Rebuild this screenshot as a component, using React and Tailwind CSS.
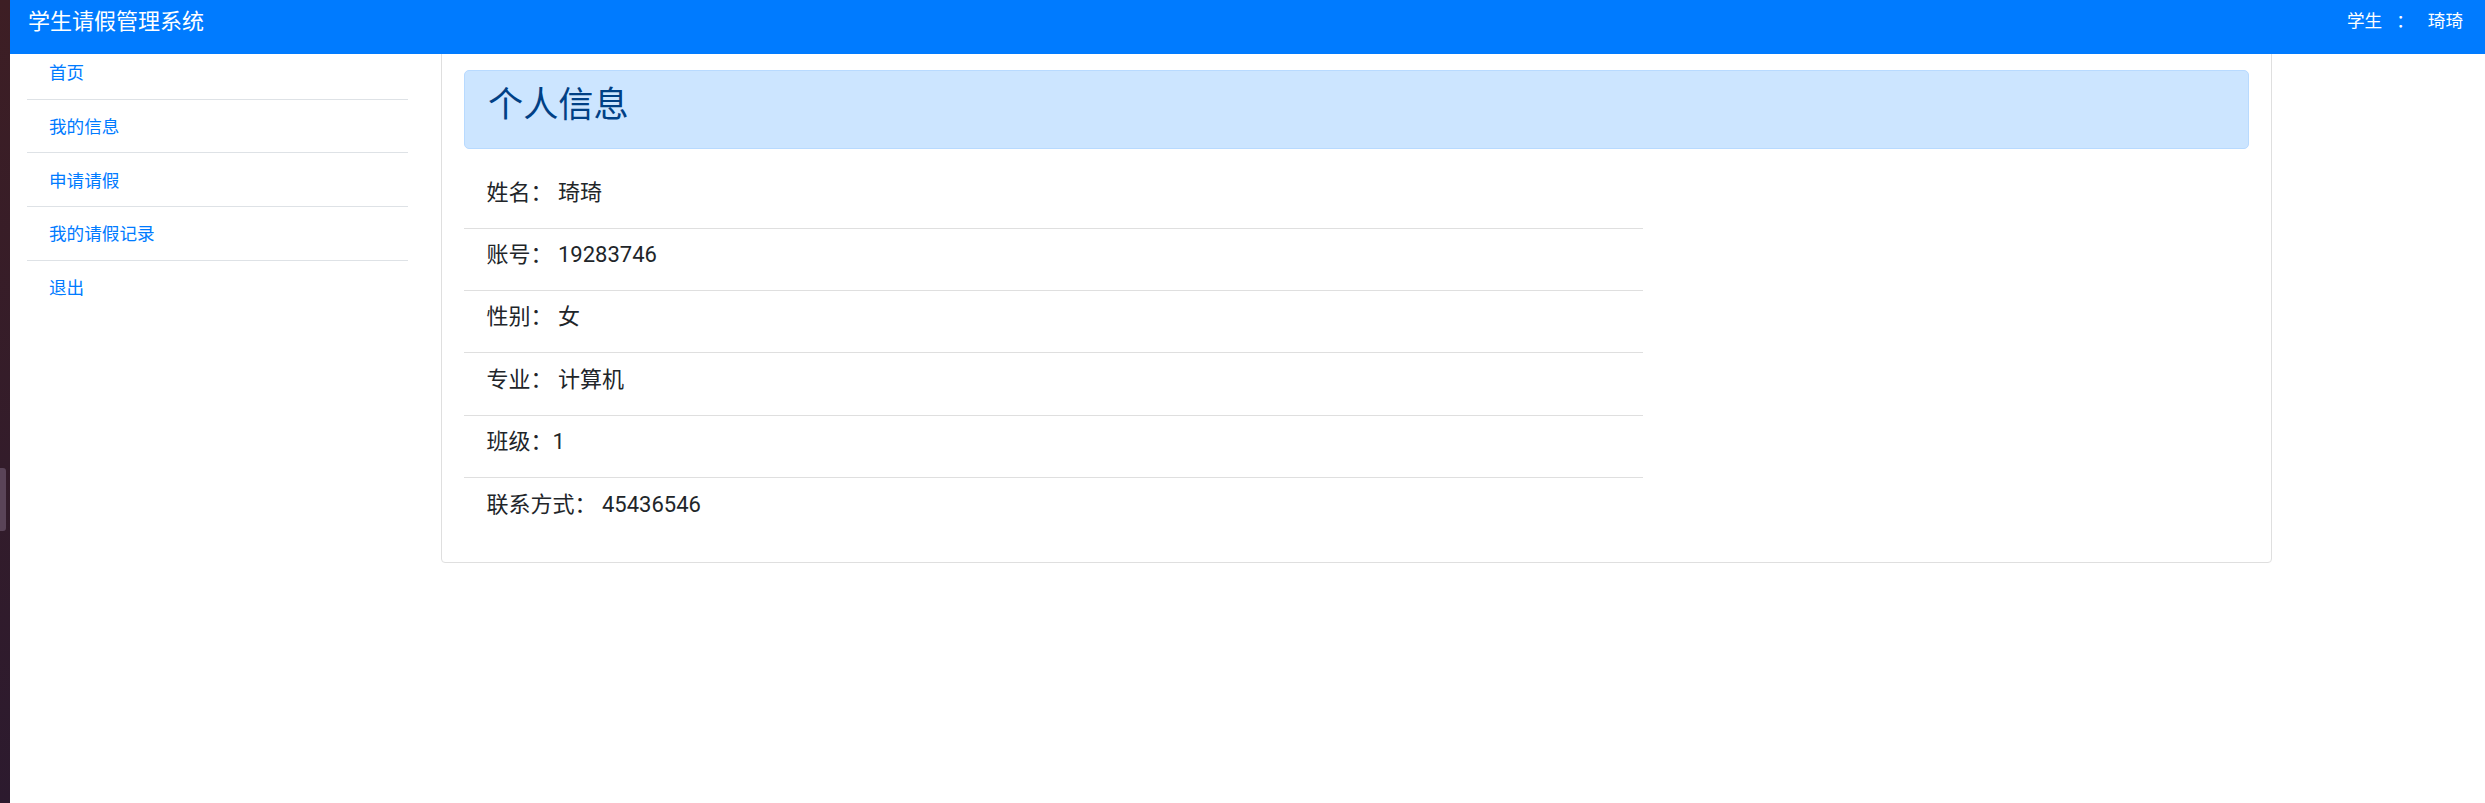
const navItems = ["首页", "我的信息", "申请请假", "我的请假记录", "退出"];

const rows = [
  ["姓名：", " 琦琦"],
  ["账号：", " 19283746"],
  ["性别：", " 女"],
  ["专业：", " 计算机"],
  ["班级：", "1"],
  ["联系方式：", " 45436546"],
];

export default function App() {
  return (
    <div className="flex h-screen w-full overflow-hidden bg-white font-[Roboto,'Noto_Sans_CJK_SC',sans-serif]">
      <div className="flex w-[10px] shrink-0 flex-col bg-gradient-to-b from-[#3d1e24] to-[#2c1a2e]">
        <div className="mt-[468px] h-[63px] w-[6px] rounded-r-[3px] bg-[#5a4458]" />
      </div>
      <div className="flex min-w-0 flex-1 flex-col">
        <nav className="relative z-10 flex h-[54px] shrink-0 items-center justify-between bg-[#007bff] pb-[10px] pl-[18px] pr-[22px]">
          <span className="whitespace-pre text-[22px] leading-none text-white">学生请假管理系统</span>
          <div className="flex items-center text-[17.6px] leading-none text-white">
            <span>学生</span>
            <span className="mx-[14px]">：</span>
            <span>琦琦</span>
          </div>
        </nav>
        <div className="-mt-[8px] flex items-start">
          <aside className="w-[431px] shrink-0 pl-[17px] pr-[33px]">
            <ul>
              {navItems.map((t, i) => (
                <li
                  key={t}
                  className={
                    "flex h-[53.7px] items-center pl-[22px] pt-[2px] text-[17.6px] text-[#007bff] " +
                    (i < navItems.length - 1 ? "border-b border-[#dee2e6]" : "")
                  }
                >
                  {t}
                </li>
              ))}
            </ul>
          </aside>
          <section className="w-[1831px] shrink-0 rounded-[4px] border border-[#dfdfdf] px-[22px] pb-[22px] pt-[23px]">
            <div className="h-[79px] rounded-[5px] border border-[#b8daff] bg-[#cce5ff] pl-[23px] pt-[13px]">
              <h2 className="text-[35.2px] font-normal leading-[42px] text-[#004085]">个人信息</h2>
            </div>
            <div className="mt-[17.6px] w-[1179px]">
              {rows.map(([k, v], i) => (
                <div
                  key={k}
                  className={
                    "flex h-[62.3px] items-center whitespace-pre pb-[10px] pl-[22.5px] text-[22px] text-[#212529] " +
                    (i < rows.length - 1 ? "border-b border-[#dfdfdf]" : "")
                  }
                >
                  {k}
                  {v}
                </div>
              ))}
            </div>
          </section>
        </div>
      </div>
    </div>
  );
}
